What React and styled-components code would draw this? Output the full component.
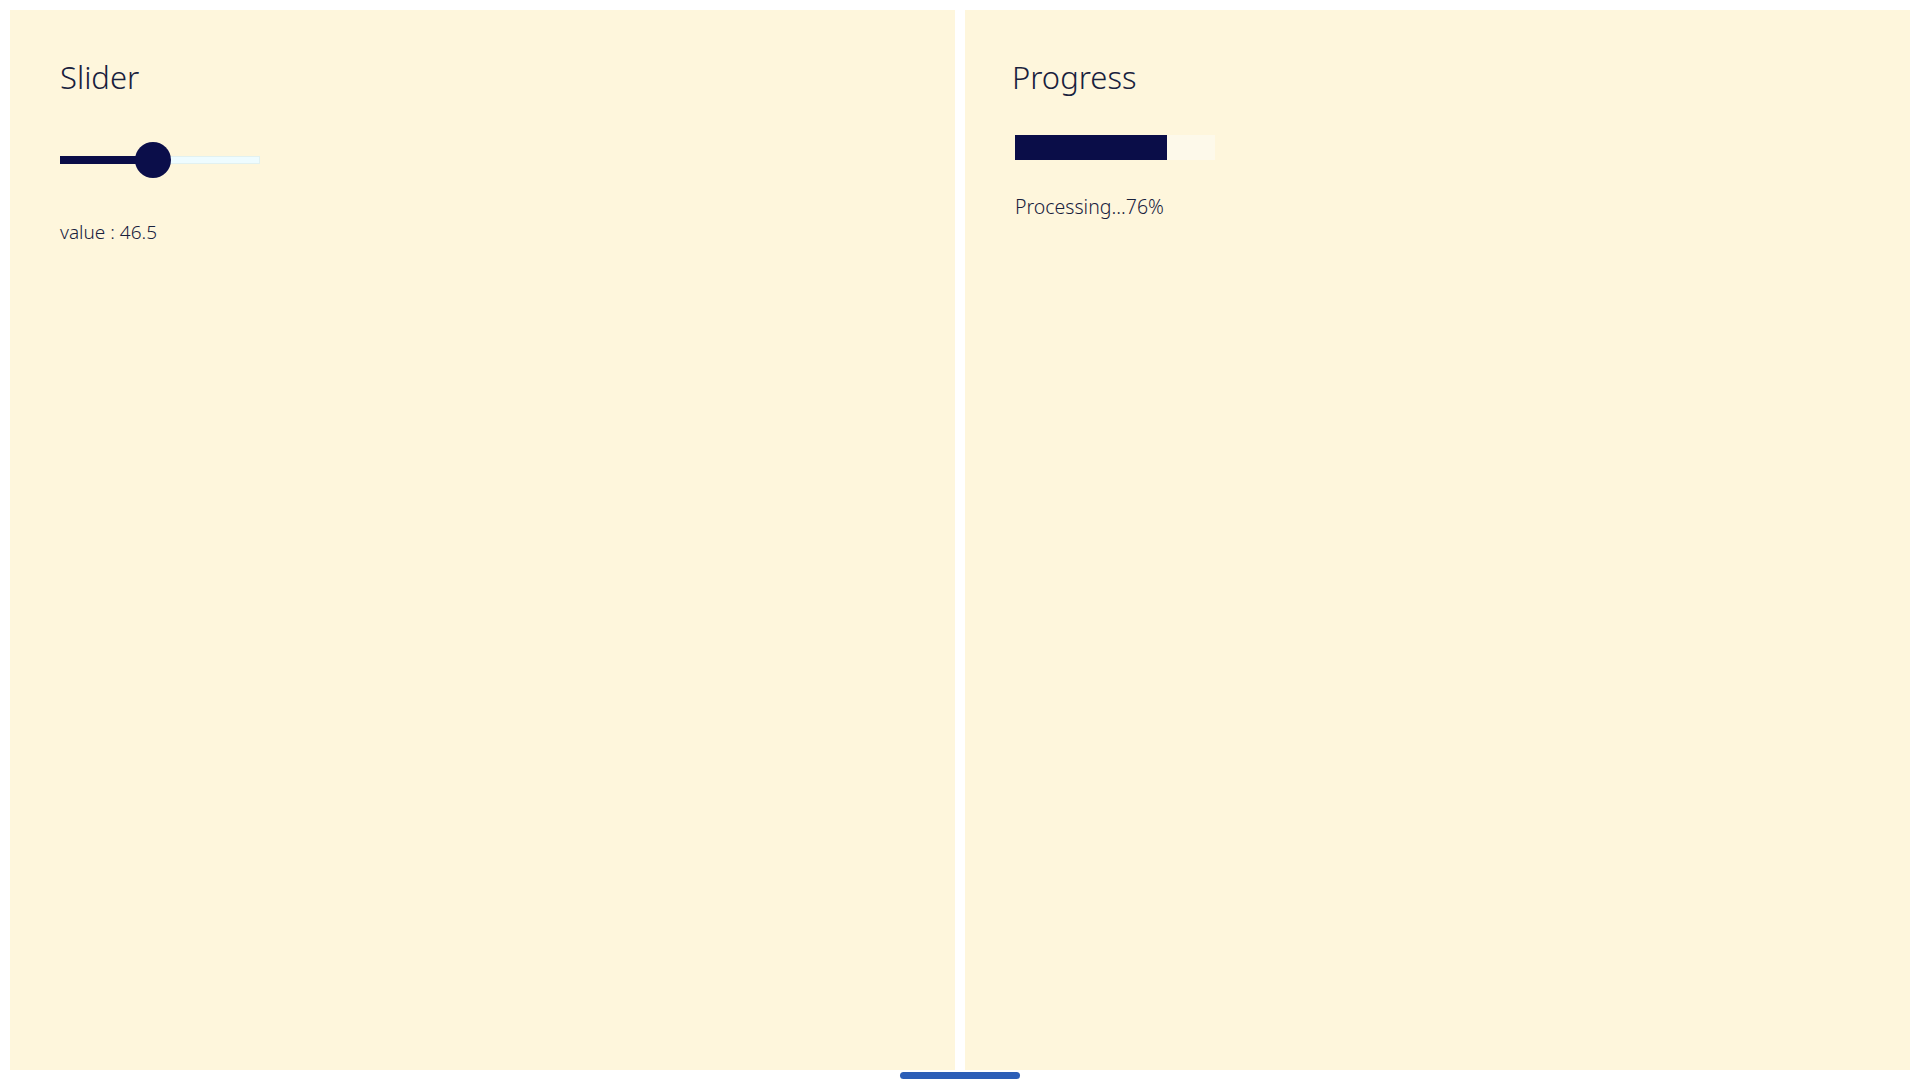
import React from "react";
import styled, { createGlobalStyle } from "styled-components";

const GlobalStyle = createGlobalStyle`
  html, body { margin: 0; padding: 0; background: #ffffff; }
  body { font-family: "Noto Sans", "Open Sans", sans-serif; color: #1b2440; }
  * { box-sizing: border-box; }
`;

const Page = styled.div`
  width: 1920px;
  height: 1080px;
  display: flex;
  flex-direction: column;
  padding: 10px 10px 0;
  overflow: hidden;
`;

const Panels = styled.main`
  display: grid;
  grid-template-columns: 1fr 1fr;
  gap: 10px;
  height: 1060px;
`;

const Panel = styled.section`
  background: #fef6dc;
  padding: 45px 50px;
  display: flex;
  flex-direction: column;
  align-items: flex-start;
`;

const Title = styled.h2`
  margin: 0 0 0 ${p => p.$shift || 0}px;
  font-size: 31px;
  font-weight: 300;
  line-height: 44px;
  color: #18213d;
`;

const SliderWrap = styled.div`
  position: relative;
  width: 200px;
  height: 36px;
  margin-top: 43px;
  display: flex;
  align-items: center;
`;

const Track = styled.div`
  position: relative;
  width: 100%;
  height: 8px;
  background: #eefcff;
  border: 1px solid #e2f1f0;
`;

const Fill = styled.div`
  position: absolute;
  left: -1px;
  top: -1px;
  bottom: -1px;
  background: #0a0d48;
`;

const Thumb = styled.div`
  position: absolute;
  top: 0;
  width: 36px;
  height: 36px;
  margin-left: -18px;
  border-radius: 50%;
  background: #0b0e4a;
`;

const ValueText = styled.p`
  margin: 42px 0 0;
  font-size: 19px;
  font-weight: 300;
  line-height: 24px;
  color: #18213d;
`;

const ProgressBar = styled.div`
  width: 200px;
  height: 25px;
  margin-top: 36px;
  background: #fdf9ea;
  display: flex;
`;

const ProgressFill = styled.div`
  height: 100%;
  background: #0a0d48;
`;

const StatusText = styled.p`
  margin: 33px 0 0;
  font-size: 19.5px;
  font-weight: 300;
  line-height: 28px;
  color: #18213d;
`;

const Footer = styled.footer`
  display: flex;
  justify-content: center;
  padding-top: 2px;
`;

const Pill = styled.div`
  width: 120px;
  height: 7px;
  border-radius: 4px;
  background: #2a5db7;
`;

export default function App() {
  const value = 46.5;
  const progress = 76;
  return (
    <>
      <GlobalStyle />
      <Page>
        <Panels>
          <Panel>
            <Title>Slider</Title>
            <SliderWrap>
              <Track>
                <Fill style={{ width: `calc(${value}% + 1px)` }} />
              </Track>
              <Thumb style={{ left: `${value}%` }} />
            </SliderWrap>
            <ValueText>value : {value}</ValueText>
          </Panel>
          <Panel>
            <Title $shift={-3}>Progress</Title>
            <ProgressBar>
              <ProgressFill style={{ width: `${progress}%` }} />
            </ProgressBar>
            <StatusText>Processing...{progress}%</StatusText>
          </Panel>
        </Panels>
        <Footer>
          <Pill />
        </Footer>
      </Page>
    </>
  );
}
